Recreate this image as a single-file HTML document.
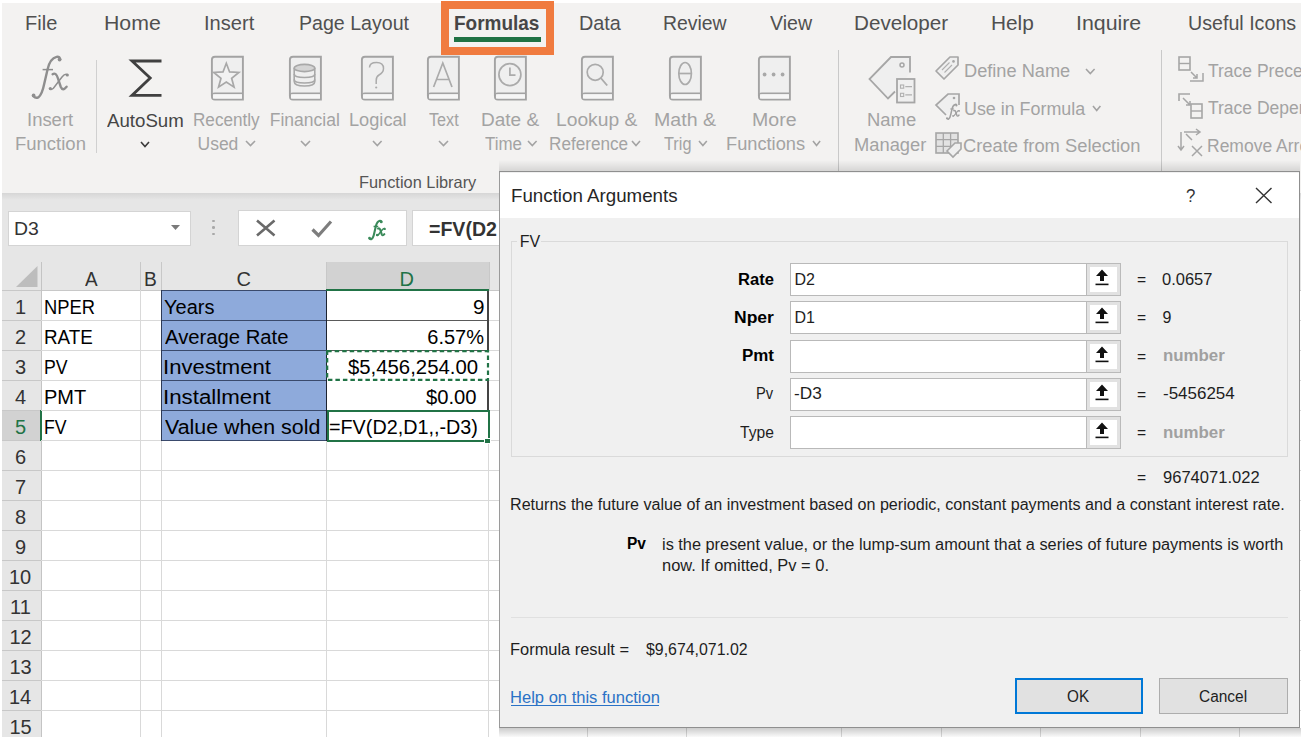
<!DOCTYPE html>
<html><head><meta charset="utf-8"><style>
html,body{margin:0;padding:0;width:1301px;height:737px;overflow:hidden;background:#fff;}
body{position:relative;font-family:"Liberation Sans",sans-serif;}
.t{position:absolute;white-space:pre;transform-origin:0 0;}
.a{position:absolute;box-sizing:border-box;}
svg{position:absolute;overflow:visible;}
</style></head><body>
<div class=a style="left:0px;top:0px;width:1301px;height:737px;background:#fff"></div>
<div class=a style="left:1.5px;top:3px;width:1299.5px;height:190px;background:#f3f2f1"></div>
<div class=a style="left:1.5px;top:193px;width:1299.5px;height:69px;background:#e6e6e6"></div>
<div class=a style="left:1.5px;top:193px;width:1299.5px;height:7px;background:linear-gradient(#d6d6d6,#e6e6e6)"></div>
<div class=a style="left:441px;top:1px;width:113px;height:54px;border:8px solid #f07b3f"></div>
<div class=a style="left:453.5px;top:37px;width:87px;height:4.6px;background:#1f7244"></div>
<div class=a style="left:96px;top:60px;width:1px;height:93px;background:#d0d0d0"></div>
<div class=a style="left:838px;top:50px;width:1px;height:143px;background:#c9c9c9"></div>
<div class=a style="left:1161px;top:50px;width:1px;height:122px;background:#c9c9c9"></div>
<div class=a style="left:7.5px;top:211px;width:183.5px;height:35px;background:#fff;border:1px solid #d4d4d4"></div>
<svg style="left:171px;top:225px" width="9" height="5"><path d="M0 0 L9 0 L4.5 5Z" fill="#7a7a7a"/></svg>
<div class=a style="left:212px;top:219.5px;width:2.5px;height:2.5px;background:#a8a8a8;border-radius:50%"></div>
<div class=a style="left:212px;top:226px;width:2.5px;height:2.5px;background:#a8a8a8;border-radius:50%"></div>
<div class=a style="left:212px;top:232.5px;width:2.5px;height:2.5px;background:#a8a8a8;border-radius:50%"></div>
<div class=a style="left:237.5px;top:210px;width:169px;height:36px;background:#fff;border:1px solid #d4d4d4"></div>
<svg style="left:256px;top:220px" width="20" height="16"><path d="M1 0.5 L18.5 15.5 M18.5 0.5 L1 15.5" stroke="#6a6a6a" stroke-width="2.6" fill="none"/></svg>
<svg style="left:311px;top:220px" width="22" height="18"><path d="M1.5 9.5 L7.5 15.5 L20 1.5" stroke="#7d7d7d" stroke-width="3.2" fill="none"/></svg>
<svg style="left:366.94px;top:219.10px" width="20" height="21" viewBox="0 0 44.44 46.67"><path d="M5.5 43.3 Q7.5 45.6 10.3 44.4 Q14 42 16.3 30.6 L19.6 16.3 Q22 5.5 28.6 3.9 Q31.5 3.4 32.2 6.3" fill="none" stroke="#3a8a5a" stroke-width="4.6" stroke-linecap="round"/><circle cx="5.6" cy="42.4" r="3" fill="#3a8a5a"/><circle cx="31.6" cy="6.6" r="3" fill="#3a8a5a"/><path d="M14.6 16.6 H25" stroke="#3a8a5a" stroke-width="3.4"/><path d="M24.6 21.2 Q28 19 30 25.5 L32.8 34 Q34.8 38.5 38.6 33.8" fill="none" stroke="#3a8a5a" stroke-width="4.6" stroke-linecap="round"/><path d="M39.4 21.6 Q37 20.2 34 24 L25.4 35.2 Q23.4 37.2 21.8 36" fill="none" stroke="#3a8a5a" stroke-width="3.4"/><circle cx="39.3" cy="22" r="2.6" fill="#3a8a5a"/><circle cx="22.3" cy="35.6" r="2.6" fill="#3a8a5a"/></svg>
<div class=a style="left:411.5px;top:210px;width:90px;height:36px;background:#fff;border:1px solid #d4d4d4;border-right:none"></div>
<div class=a style="left:1.5px;top:262px;width:1299.5px;height:28px;background:#e6e6e6"></div>
<div class=a style="left:326px;top:262px;width:163px;height:28px;background:#d2d2d2"></div>
<div class=a style="left:326px;top:288.8px;width:163px;height:2px;background:#217346"></div>
<div class=a style="left:1.5px;top:290px;width:39.5px;height:447px;background:#e6e6e6"></div>
<div class=a style="left:1.5px;top:410px;width:39.5px;height:30px;background:#d2d2d2"></div>
<div class=a style="left:39.5px;top:410px;width:2px;height:31px;background:#217346"></div>
<svg style="left:15px;top:265px" width="24" height="23"><path d="M22.5 1 L22.5 22 L1 22Z" fill="#bdbdbd"/></svg>
<div class=a style="left:41px;top:262px;width:1px;height:28px;background:#c8c8c8"></div>
<div class=a style="left:140px;top:262px;width:1px;height:28px;background:#c8c8c8"></div>
<div class=a style="left:161px;top:262px;width:1px;height:28px;background:#c8c8c8"></div>
<div class=a style="left:489px;top:262px;width:1px;height:28px;background:#c8c8c8"></div>
<div class=a style="left:326px;top:262px;width:1px;height:28px;background:#c8c8c8"></div>
<div class=a style="left:1.5px;top:289.5px;width:1299.5px;height:1px;background:#c8c8c8"></div>
<div class=a style="left:326px;top:288.8px;width:163px;height:2px;background:#217346"></div>
<div class=a style="left:1.5px;top:320px;width:39.5px;height:1px;background:#c8c8c8"></div>
<div class=a style="left:1.5px;top:350px;width:39.5px;height:1px;background:#c8c8c8"></div>
<div class=a style="left:1.5px;top:380px;width:39.5px;height:1px;background:#c8c8c8"></div>
<div class=a style="left:1.5px;top:410px;width:39.5px;height:1px;background:#c8c8c8"></div>
<div class=a style="left:1.5px;top:440px;width:39.5px;height:1px;background:#c8c8c8"></div>
<div class=a style="left:1.5px;top:470px;width:39.5px;height:1px;background:#c8c8c8"></div>
<div class=a style="left:1.5px;top:500px;width:39.5px;height:1px;background:#c8c8c8"></div>
<div class=a style="left:1.5px;top:530px;width:39.5px;height:1px;background:#c8c8c8"></div>
<div class=a style="left:1.5px;top:560px;width:39.5px;height:1px;background:#c8c8c8"></div>
<div class=a style="left:1.5px;top:590px;width:39.5px;height:1px;background:#c8c8c8"></div>
<div class=a style="left:1.5px;top:620px;width:39.5px;height:1px;background:#c8c8c8"></div>
<div class=a style="left:1.5px;top:650px;width:39.5px;height:1px;background:#c8c8c8"></div>
<div class=a style="left:1.5px;top:680px;width:39.5px;height:1px;background:#c8c8c8"></div>
<div class=a style="left:1.5px;top:710px;width:39.5px;height:1px;background:#c8c8c8"></div>
<div class=a style="left:1.5px;top:740px;width:39.5px;height:1px;background:#c8c8c8"></div>
<div class=a style="left:40.5px;top:262px;width:1px;height:475px;background:#c4c4c4"></div>
<div class=a style="left:39.5px;top:410px;width:2px;height:31px;background:#217346"></div>
<div class=a style="left:140px;top:290px;width:1px;height:447px;background:#d9d9d9"></div>
<div class=a style="left:161px;top:290px;width:1px;height:447px;background:#d9d9d9"></div>
<div class=a style="left:326px;top:290px;width:1px;height:447px;background:#d9d9d9"></div>
<div class=a style="left:488px;top:290px;width:1px;height:447px;background:#d9d9d9"></div>
<div class=a style="left:587px;top:290px;width:1px;height:447px;background:#d9d9d9"></div>
<div class=a style="left:686px;top:290px;width:1px;height:447px;background:#d9d9d9"></div>
<div class=a style="left:841px;top:290px;width:1px;height:447px;background:#d9d9d9"></div>
<div class=a style="left:941px;top:290px;width:1px;height:447px;background:#d9d9d9"></div>
<div class=a style="left:1040px;top:290px;width:1px;height:447px;background:#d9d9d9"></div>
<div class=a style="left:1140px;top:290px;width:1px;height:447px;background:#d9d9d9"></div>
<div class=a style="left:1239px;top:290px;width:1px;height:447px;background:#d9d9d9"></div>
<div class=a style="left:41px;top:320px;width:1260px;height:1px;background:#d9d9d9"></div>
<div class=a style="left:41px;top:350px;width:1260px;height:1px;background:#d9d9d9"></div>
<div class=a style="left:41px;top:380px;width:1260px;height:1px;background:#d9d9d9"></div>
<div class=a style="left:41px;top:410px;width:1260px;height:1px;background:#d9d9d9"></div>
<div class=a style="left:41px;top:440px;width:1260px;height:1px;background:#d9d9d9"></div>
<div class=a style="left:41px;top:470px;width:1260px;height:1px;background:#d9d9d9"></div>
<div class=a style="left:41px;top:500px;width:1260px;height:1px;background:#d9d9d9"></div>
<div class=a style="left:41px;top:530px;width:1260px;height:1px;background:#d9d9d9"></div>
<div class=a style="left:41px;top:560px;width:1260px;height:1px;background:#d9d9d9"></div>
<div class=a style="left:41px;top:590px;width:1260px;height:1px;background:#d9d9d9"></div>
<div class=a style="left:41px;top:620px;width:1260px;height:1px;background:#d9d9d9"></div>
<div class=a style="left:41px;top:650px;width:1260px;height:1px;background:#d9d9d9"></div>
<div class=a style="left:41px;top:680px;width:1260px;height:1px;background:#d9d9d9"></div>
<div class=a style="left:41px;top:710px;width:1260px;height:1px;background:#d9d9d9"></div>
<div class=a style="left:41px;top:740px;width:1260px;height:1px;background:#d9d9d9"></div>
<div class=a style="left:161px;top:290px;width:165.5px;height:150px;background:#8eaadb"></div>
<div class=a style="left:160.5px;top:319.6px;width:166px;height:1.9px;background:#3a4a6c"></div>
<div class=a style="left:326px;top:319.6px;width:163px;height:1.9px;background:#5a5a5a"></div>
<div class=a style="left:160.5px;top:349.6px;width:166px;height:1.9px;background:#3a4a6c"></div>
<div class=a style="left:326px;top:349.6px;width:163px;height:1.9px;background:#5a5a5a"></div>
<div class=a style="left:160.5px;top:379.6px;width:166px;height:1.9px;background:#3a4a6c"></div>
<div class=a style="left:326px;top:379.6px;width:163px;height:1.9px;background:#5a5a5a"></div>
<div class=a style="left:160.5px;top:409.6px;width:166px;height:1.9px;background:#3a4a6c"></div>
<div class=a style="left:326px;top:409.6px;width:163px;height:1.9px;background:#5a5a5a"></div>
<div class=a style="left:160.5px;top:439.6px;width:166px;height:1.9px;background:#3a4a6c"></div>
<div class=a style="left:326px;top:439.6px;width:163px;height:1.9px;background:#5a5a5a"></div>
<div class=a style="left:160.5px;top:290px;width:166px;height:1px;background:#3a4a6c"></div>
<div class=a style="left:160.5px;top:290px;width:1.9px;height:151px;background:#2e3a55"></div>
<div class=a style="left:325.5px;top:290px;width:1.8px;height:151px;background:#1e2430"></div>
<div class=a style="left:487.4px;top:290px;width:1.7px;height:151px;background:#444"></div>
<div class=a style="left:326.5px;top:350.5px;width:162px;height:30px;background:#fff"></div>
<svg style="left:326px;top:350px" width="164" height="32"><rect x="1.2" y="1.2" width="160.8" height="28.6" fill="none" stroke="#217346" stroke-width="2.2" stroke-dasharray="4.5 3"/></svg>
<div class=a style="left:326.5px;top:410px;width:163px;height:31.5px;background:#fff;border:2px solid #217346"></div>
<div class=a style="left:484px;top:437.5px;width:7px;height:6px;background:#217346;border:1px solid #fff"></div>
<div class=a style="left:326px;top:288.8px;width:163px;height:2px;background:#217346"></div>
<svg style="left:28px;top:53px" width="44" height="48" viewBox="0 0 44 48"><path d="M5.5 43.3 Q7.5 45.6 10.3 44.4 Q14 42 16.3 30.6 L19.6 16.3 Q22 5.5 28.6 3.9 Q31.5 3.4 32.2 6.3" fill="none" stroke="#8e8e8e" stroke-width="2.4" stroke-linecap="round"/><circle cx="5.6" cy="42.4" r="1.9" fill="#8e8e8e"/><circle cx="31.6" cy="6.6" r="1.9" fill="#8e8e8e"/><path d="M14.6 16.6 H25" stroke="#8e8e8e" stroke-width="1.5"/><path d="M24.6 21.2 Q28 19 30 25.5 L32.8 34 Q34.8 38.5 38.6 33.8" fill="none" stroke="#8e8e8e" stroke-width="2.4" stroke-linecap="round"/><path d="M39.4 21.6 Q37 20.2 34 24 L25.4 35.2 Q23.4 37.2 21.8 36" fill="none" stroke="#8e8e8e" stroke-width="1.5"/><circle cx="39.3" cy="22" r="1.6" fill="#8e8e8e"/><circle cx="22.3" cy="35.6" r="1.6" fill="#8e8e8e"/></svg>
<svg style="left:128px;top:57px" width="36" height="42" viewBox="0 0 36 42"><path d="M33.5 4 H4 L22.2 21 L4 38.4 H33.5" fill="none" stroke="#404040" stroke-width="2.8" stroke-linejoin="miter"/></svg>
<svg style="left:139px;top:139.5px" width="12" height="8.5" viewBox="0 0 12 8.5"><path d="M2 2 L6.0 6.5 L10 2" fill="none" stroke="#3a3a3a" stroke-width="1.6"/></svg>
<svg style="left:243.5px;top:139px" width="13.0" height="8.5" viewBox="0 0 13.0 8.5"><path d="M2 2 L6.5 6.5 L11.0 2" fill="none" stroke="#a3a3a3" stroke-width="1.6"/></svg>
<svg style="left:298.6px;top:139px" width="13.0" height="8.5" viewBox="0 0 13.0 8.5"><path d="M2 2 L6.5 6.5 L11.0 2" fill="none" stroke="#a3a3a3" stroke-width="1.6"/></svg>
<svg style="left:370.9px;top:139px" width="12.600000000000023" height="8.5" viewBox="0 0 12.600000000000023 8.5"><path d="M2 2 L6.300000000000011 6.5 L10.600000000000023 2" fill="none" stroke="#a3a3a3" stroke-width="1.6"/></svg>
<svg style="left:437px;top:139px" width="13" height="8.5" viewBox="0 0 13 8.5"><path d="M2 2 L6.5 6.5 L11 2" fill="none" stroke="#a3a3a3" stroke-width="1.6"/></svg>
<svg style="left:526.4px;top:139px" width="12.600000000000023" height="8.5" viewBox="0 0 12.600000000000023 8.5"><path d="M2 2 L6.300000000000011 6.5 L10.600000000000023 2" fill="none" stroke="#a3a3a3" stroke-width="1.6"/></svg>
<svg style="left:630px;top:139px" width="12" height="8.5" viewBox="0 0 12 8.5"><path d="M2 2 L6.0 6.5 L10 2" fill="none" stroke="#a3a3a3" stroke-width="1.6"/></svg>
<svg style="left:697px;top:139px" width="11.799999999999955" height="8.5" viewBox="0 0 11.799999999999955 8.5"><path d="M2 2 L5.899999999999977 6.5 L9.799999999999955 2" fill="none" stroke="#a3a3a3" stroke-width="1.6"/></svg>
<svg style="left:810.5px;top:139px" width="11.100000000000023" height="8.5" viewBox="0 0 11.100000000000023 8.5"><path d="M2 2 L5.550000000000011 6.5 L9.100000000000023 2" fill="none" stroke="#a3a3a3" stroke-width="1.6"/></svg>
<svg style="left:1084px;top:67px" width="12.599999999999909" height="8.5" viewBox="0 0 12.599999999999909 8.5"><path d="M2 2 L6.2999999999999545 6.5 L10.599999999999909 2" fill="none" stroke="#a3a3a3" stroke-width="1.6"/></svg>
<svg style="left:1091.4px;top:104px" width="11.399999999999864" height="8.5" viewBox="0 0 11.399999999999864 8.5"><path d="M2 2 L5.699999999999932 6.5 L9.399999999999864 2" fill="none" stroke="#a3a3a3" stroke-width="1.6"/></svg>
<svg style="left:209.8px;top:55px" width="36" height="47" viewBox="0 0 36 47"><path d="M32.9 1.7 H5 Q1.9 1.7 1.9 4.8 V41.4 Q1.9 44.5 5 44.5 H32.9 Z" fill="#efefef" stroke="#a3a3a3" stroke-width="1.9"/><path d="M32.9 38.3 H5 Q1.9 38.3 1.9 41.4" fill="none" stroke="#a3a3a3" stroke-width="1.7"/><rect x="3" y="39.3" width="29" height="4.3" fill="#f6f6f6"/><path d="M16.30 8.30 L19.59 16.97 L28.85 17.42 L21.63 23.23 L24.06 32.18 L16.30 27.10 L8.54 32.18 L10.97 23.23 L3.75 17.42 L13.01 16.97Z" fill="#f2f2f2" stroke="#a8a8a8" stroke-width="1.7" stroke-linejoin="miter"/></svg>
<svg style="left:287.9px;top:55px" width="36" height="47" viewBox="0 0 36 47"><path d="M32.9 1.7 H5 Q1.9 1.7 1.9 4.8 V41.4 Q1.9 44.5 5 44.5 H32.9 Z" fill="#efefef" stroke="#a3a3a3" stroke-width="1.9"/><path d="M32.9 38.3 H5 Q1.9 38.3 1.9 41.4" fill="none" stroke="#a3a3a3" stroke-width="1.7"/><rect x="3" y="39.3" width="29" height="4.3" fill="#f6f6f6"/><ellipse cx="16.5" cy="13" rx="10.3" ry="3.6" fill="#d4d4d4" stroke="#a8a8a8" stroke-width="1.6"/><path d="M6.2 13 V26.5 Q6.2 31 16.5 31 Q26.8 31 26.8 26.5 V13" fill="none" stroke="#a8a8a8" stroke-width="1.6"/><path d="M6.2 19 Q6.2 22.5 16.5 22.5 Q26.8 22.5 26.8 19 M6.2 24.5 Q6.2 28 16.5 28 Q26.8 28 26.8 24.5" fill="none" stroke="#a8a8a8" stroke-width="1.6"/></svg>
<svg style="left:360px;top:55px" width="36" height="47" viewBox="0 0 36 47"><path d="M32.9 1.7 H5 Q1.9 1.7 1.9 4.8 V41.4 Q1.9 44.5 5 44.5 H32.9 Z" fill="#efefef" stroke="#a3a3a3" stroke-width="1.9"/><path d="M32.9 38.3 H5 Q1.9 38.3 1.9 41.4" fill="none" stroke="#a3a3a3" stroke-width="1.7"/><rect x="3" y="39.3" width="29" height="4.3" fill="#f6f6f6"/><path d="M9.5 12.5 Q9.5 7.5 16.5 7.5 Q23.5 7.5 23.5 13.5 Q23.5 17.5 19 20 Q16.2 21.5 16.2 25.5 V29" fill="none" stroke="#ababab" stroke-width="1.5"/><circle cx="16.2" cy="32.5" r="1.1" fill="#ababab"/></svg>
<svg style="left:426.3px;top:55px" width="36" height="47" viewBox="0 0 36 47"><path d="M32.9 1.7 H5 Q1.9 1.7 1.9 4.8 V41.4 Q1.9 44.5 5 44.5 H32.9 Z" fill="#efefef" stroke="#a3a3a3" stroke-width="1.9"/><path d="M32.9 38.3 H5 Q1.9 38.3 1.9 41.4" fill="none" stroke="#a3a3a3" stroke-width="1.7"/><rect x="3" y="39.3" width="29" height="4.3" fill="#f6f6f6"/><path d="M7.6 32 L16.8 8 L26 32 M10.8 24.5 H22.8" fill="none" stroke="#ababab" stroke-width="1.7"/></svg>
<svg style="left:493px;top:55px" width="36" height="47" viewBox="0 0 36 47"><path d="M32.9 1.7 H5 Q1.9 1.7 1.9 4.8 V41.4 Q1.9 44.5 5 44.5 H32.9 Z" fill="#efefef" stroke="#a3a3a3" stroke-width="1.9"/><path d="M32.9 38.3 H5 Q1.9 38.3 1.9 41.4" fill="none" stroke="#a3a3a3" stroke-width="1.7"/><rect x="3" y="39.3" width="29" height="4.3" fill="#f6f6f6"/><circle cx="16.9" cy="19.6" r="11" fill="none" stroke="#ababab" stroke-width="1.7"/><path d="M16.9 12.5 V20.2 H22.5" fill="none" stroke="#ababab" stroke-width="1.7"/></svg>
<svg style="left:580px;top:55px" width="36" height="47" viewBox="0 0 36 47"><path d="M32.9 1.7 H5 Q1.9 1.7 1.9 4.8 V41.4 Q1.9 44.5 5 44.5 H32.9 Z" fill="#efefef" stroke="#a3a3a3" stroke-width="1.9"/><path d="M32.9 38.3 H5 Q1.9 38.3 1.9 41.4" fill="none" stroke="#a3a3a3" stroke-width="1.7"/><rect x="3" y="39.3" width="29" height="4.3" fill="#f6f6f6"/><circle cx="15.2" cy="17.3" r="8" fill="none" stroke="#ababab" stroke-width="1.7"/><path d="M20.8 23 L27.2 30.5" fill="none" stroke="#ababab" stroke-width="1.9"/></svg>
<svg style="left:667.7px;top:55px" width="36" height="47" viewBox="0 0 36 47"><path d="M32.9 1.7 H5 Q1.9 1.7 1.9 4.8 V41.4 Q1.9 44.5 5 44.5 H32.9 Z" fill="#efefef" stroke="#a3a3a3" stroke-width="1.9"/><path d="M32.9 38.3 H5 Q1.9 38.3 1.9 41.4" fill="none" stroke="#a3a3a3" stroke-width="1.7"/><rect x="3" y="39.3" width="29" height="4.3" fill="#f6f6f6"/><ellipse cx="17.1" cy="18.5" rx="6.3" ry="11" fill="none" stroke="#ababab" stroke-width="1.7"/><path d="M10.8 18.5 H23.4" stroke="#ababab" stroke-width="1.7"/></svg>
<svg style="left:756.9px;top:55px" width="36" height="47" viewBox="0 0 36 47"><path d="M32.9 1.7 H5 Q1.9 1.7 1.9 4.8 V41.4 Q1.9 44.5 5 44.5 H32.9 Z" fill="#efefef" stroke="#a3a3a3" stroke-width="1.9"/><path d="M32.9 38.3 H5 Q1.9 38.3 1.9 41.4" fill="none" stroke="#a3a3a3" stroke-width="1.7"/><rect x="3" y="39.3" width="29" height="4.3" fill="#f6f6f6"/><circle cx="7.6" cy="19.5" r="1.9" fill="#a8a8a8"/><circle cx="16.6" cy="19.5" r="1.9" fill="#a8a8a8"/><circle cx="25.6" cy="19.5" r="1.9" fill="#a8a8a8"/></svg>
<svg style="left:866px;top:54px" width="52" height="52" viewBox="0 0 52 52"><path d="M44 18.5 V3 H25 L3.5 25 L22 44.5 L29 37.5" fill="#efefef" stroke="#a6a6a6" stroke-width="1.8" stroke-linejoin="miter"/><circle cx="36" cy="11" r="2" fill="none" stroke="#a6a6a6" stroke-width="1.5"/><rect x="31" y="25" width="17.5" height="23.5" fill="#efefef" stroke="#a6a6a6" stroke-width="1.8"/><rect x="34.5" y="31" width="3.2" height="3.2" fill="none" stroke="#b0b0b0" stroke-width="1.1"/><rect x="34.5" y="39.3" width="3.2" height="3.2" fill="none" stroke="#b0b0b0" stroke-width="1.1"/><path d="M39.3 32.6 H46 M39.3 40.9 H46" stroke="#b0b0b0" stroke-width="1.2"/></svg>
<svg style="left:933px;top:54px" width="28" height="28" viewBox="0 0 28 28"><path d="M25 3 L25 11 L11 25 L3 17 L17 3 Z" fill="#efefef" stroke="#a6a6a6" stroke-width="1.7" stroke-linejoin="round"/><circle cx="20.5" cy="7.4" r="1.3" fill="#a6a6a6"/><path d="M9 16 L16.5 8.5 M11.5 18.5 L19 11" stroke="#b0b0b0" stroke-width="1.1"/></svg>
<svg style="left:933px;top:91px" width="30" height="30" viewBox="0 0 30 30"><path d="M26 14 V3 H15 L3 14 L13 24" fill="#efefef" stroke="#a6a6a6" stroke-width="1.7"/><circle cx="21" cy="7" r="1.3" fill="#a6a6a6"/></svg>
<svg style="left:945.368px;top:102.98px" width="16" height="17" viewBox="0 0 16 17"><g transform="scale(0.36)"><path d="M5.5 43.3 Q7.5 45.6 10.3 44.4 Q14 42 16.3 30.6 L19.6 16.3 Q22 5.5 28.6 3.9 Q31.5 3.4 32.2 6.3" fill="none" stroke="#a0a0a0" stroke-width="4.2" stroke-linecap="round"/><circle cx="5.6" cy="42.4" r="2.8" fill="#a0a0a0"/><circle cx="31.6" cy="6.6" r="2.8" fill="#a0a0a0"/><path d="M14.6 16.6 H25" stroke="#a0a0a0" stroke-width="3"/><path d="M24.6 21.2 Q28 19 30 25.5 L32.8 34 Q34.8 38.5 38.6 33.8" fill="none" stroke="#a0a0a0" stroke-width="4.2" stroke-linecap="round"/><path d="M39.4 21.6 Q37 20.2 34 24 L25.4 35.2 Q23.4 37.2 21.8 36" fill="none" stroke="#a0a0a0" stroke-width="3"/><circle cx="39.3" cy="22" r="2.4" fill="#a0a0a0"/><circle cx="22.3" cy="35.6" r="2.4" fill="#a0a0a0"/></g></svg>
<svg style="left:934px;top:131px" width="30" height="28" viewBox="0 0 30 28"><rect x="2" y="2" width="22" height="20" fill="#e2e2e2" stroke="#a6a6a6" stroke-width="1.6"/><path d="M2 8.6 H24 M2 15.3 H24 M9.3 2 V22 M16.6 2 V22" stroke="#a6a6a6" stroke-width="1.3"/><path d="M13 20 L21 12 H27 V18 L19 26 Z" fill="#efefef" stroke="#a6a6a6" stroke-width="1.6"/></svg>
<svg style="left:1176px;top:54px" width="30" height="28" viewBox="0 0 30 28"><rect x="3" y="3" width="11" height="13" fill="none" stroke="#a6a6a6" stroke-width="1.6"/><path d="M3 9.5 H14" stroke="#a6a6a6" stroke-width="1.4"/><path d="M15 18 L21 24 M17 24 H21 V20 M14 27 H27 V19" fill="none" stroke="#a6a6a6" stroke-width="1.5"/></svg>
<svg style="left:1176px;top:91px" width="30" height="30" viewBox="0 0 30 30"><path d="M3 10 V3 H14" fill="none" stroke="#a6a6a6" stroke-width="1.6"/><path d="M7 7 L14 14 M10 14 H14 V10" fill="none" stroke="#a6a6a6" stroke-width="1.5"/><rect x="15" y="13" width="11" height="14" fill="none" stroke="#a6a6a6" stroke-width="1.6"/><path d="M15 20 H26" stroke="#a6a6a6" stroke-width="1.4"/></svg>
<svg style="left:1176px;top:128px" width="30" height="30" viewBox="0 0 30 30"><path d="M5 4 V22 M2 18 L5 22 L8 18 M8 4 H24 M20 1 L24 4 L20 7 M10 6 L16 12" fill="none" stroke="#a6a6a6" stroke-width="1.5"/><path d="M16 18 L26 28 M26 18 L16 28" stroke="#a6a6a6" stroke-width="1.5"/></svg>
<div class=t style="left:25.35px;top:2.90px;font-size:20.5px;line-height:40px;color:#505050;transform:scaleX(0.9767);">File</div>
<div class=t style="left:103.92px;top:2.90px;font-size:20.5px;line-height:40px;color:#505050;transform:scaleX(1.0385);">Home</div>
<div class=t style="left:204.04px;top:2.90px;font-size:20.5px;line-height:40px;color:#505050;transform:scaleX(0.9796);">Insert</div>
<div class=t style="left:299.09px;top:2.90px;font-size:20.5px;line-height:40px;color:#505050;transform:scaleX(0.9558);">Page Layout</div>
<div class=t style="left:453.57px;top:2.90px;font-size:20.5px;line-height:40px;color:#464646;font-weight:700;transform:scaleX(0.9253);">Formulas</div>
<div class=t style="left:578.97px;top:2.90px;font-size:20.5px;line-height:40px;color:#505050;transform:scaleX(0.9667);">Data</div>
<div class=t style="left:662.61px;top:2.90px;font-size:20.5px;line-height:40px;color:#505050;transform:scaleX(0.9462);">Review</div>
<div class=t style="left:770.00px;top:2.90px;font-size:20.5px;line-height:40px;color:#505050;transform:scaleX(0.9545);">View</div>
<div class=t style="left:853.79px;top:2.90px;font-size:20.5px;line-height:40px;color:#505050;transform:scaleX(1.0066);">Developer</div>
<div class=t style="left:990.77px;top:2.90px;font-size:20.5px;line-height:40px;color:#505050;transform:scaleX(1.0150);">Help</div>
<div class=t style="left:1076.42px;top:2.90px;font-size:20.5px;line-height:40px;color:#505050;transform:scaleX(1.0400);">Inquire</div>
<div class=t style="left:1187.64px;top:2.90px;font-size:20.5px;line-height:40px;color:#505050;transform:scaleX(0.9586);">Useful Icons</div>
<div class=t style="left:26.89px;top:100.04px;font-size:17.5px;line-height:40px;color:#a3a3a3;transform:scaleX(1.0548);">Insert</div>
<div class=t style="left:15.24px;top:124.44px;font-size:17.5px;line-height:40px;color:#a3a3a3;transform:scaleX(1.0569);">Function</div>
<div class=t style="left:106.70px;top:100.84px;font-size:17.5px;line-height:40px;color:#454545;transform:scaleX(1.0662);">AutoSum</div>
<div class=t style="left:193.42px;top:99.84px;font-size:17.5px;line-height:40px;color:#a3a3a3;transform:scaleX(0.9791);">Recently</div>
<div class=t style="left:197.50px;top:124.24px;font-size:17.5px;line-height:40px;color:#a3a3a3;">Used</div>
<div class=t style="left:269.80px;top:99.84px;font-size:17.5px;line-height:40px;color:#a3a3a3;">Financial</div>
<div class=t style="left:349.26px;top:99.84px;font-size:17.5px;line-height:40px;color:#a3a3a3;transform:scaleX(1.0396);">Logical</div>
<div class=t style="left:429.40px;top:99.84px;font-size:17.5px;line-height:40px;color:#a3a3a3;transform:scaleX(0.9250);">Text</div>
<div class=t style="left:481.41px;top:99.84px;font-size:17.5px;line-height:40px;color:#a3a3a3;transform:scaleX(1.0865);">Date &amp;</div>
<div class=t style="left:485.00px;top:124.24px;font-size:17.5px;line-height:40px;color:#a3a3a3;transform:scaleX(0.9658);">Time</div>
<div class=t style="left:555.60px;top:99.84px;font-size:17.5px;line-height:40px;color:#a3a3a3;transform:scaleX(1.1000);">Lookup &amp;</div>
<div class=t style="left:548.62px;top:124.24px;font-size:17.5px;line-height:40px;color:#a3a3a3;transform:scaleX(0.9797);">Reference</div>
<div class=t style="left:654.48px;top:99.84px;font-size:17.5px;line-height:40px;color:#a3a3a3;transform:scaleX(1.1185);">Math &amp;</div>
<div class=t style="left:663.70px;top:124.24px;font-size:17.5px;line-height:40px;color:#a3a3a3;transform:scaleX(0.9310);">Trig</div>
<div class=t style="left:752.48px;top:99.84px;font-size:17.5px;line-height:40px;color:#a3a3a3;transform:scaleX(1.1158);">More</div>
<div class=t style="left:725.56px;top:124.24px;font-size:17.5px;line-height:40px;color:#a3a3a3;transform:scaleX(1.0419);">Functions</div>
<div class=t style="left:866.55px;top:100.44px;font-size:17.5px;line-height:40px;color:#a3a3a3;transform:scaleX(1.0533);">Name</div>
<div class=t style="left:853.75px;top:125.24px;font-size:17.5px;line-height:40px;color:#a3a3a3;transform:scaleX(1.0471);">Manager</div>
<div class=t style="left:963.96px;top:51.44px;font-size:17.5px;line-height:40px;color:#a3a3a3;transform:scaleX(1.0396);">Define Name</div>
<div class=t style="left:963.98px;top:88.84px;font-size:17.5px;line-height:40px;color:#a3a3a3;transform:scaleX(1.0212);">Use in Formula</div>
<div class=t style="left:963.25px;top:126.44px;font-size:17.5px;line-height:40px;color:#a3a3a3;transform:scaleX(1.0485);">Create from Selection</div>
<div class=t style="left:1208.00px;top:51.44px;font-size:17.5px;line-height:40px;color:#a3a3a3;">Trace Precedents</div>
<div class=t style="left:1208.00px;top:88.44px;font-size:17.5px;line-height:40px;color:#a3a3a3;">Trace Dependents</div>
<div class=t style="left:1207.00px;top:126.14px;font-size:17.5px;line-height:40px;color:#a3a3a3;">Remove Arrows</div>
<div class=t style="left:358.91px;top:161.58px;font-size:16.5px;line-height:40px;color:#555;transform:scaleX(0.9915);">Function Library</div>
<div class=t style="left:14.48px;top:209.12px;font-size:19px;line-height:40px;color:#333;transform:scaleX(1.0217);">D3</div>
<div class=t style="left:428.62px;top:208.97px;font-size:20px;line-height:40px;color:#333;font-weight:700;transform:scaleX(0.9779);">=FV(D2</div>
<div class=t style="left:84.50px;top:258.57px;font-size:20px;line-height:40px;color:#333;transform:scaleX(0.9462);">A</div>
<div class=t style="left:144.08px;top:258.57px;font-size:20px;line-height:40px;color:#333;transform:scaleX(0.9600);">B</div>
<div class=t style="left:236.50px;top:258.57px;font-size:20px;line-height:40px;color:#333;">C</div>
<div class=t style="left:399.50px;top:258.57px;font-size:20px;line-height:40px;color:#217346;">D</div>
<div class=t style="left:15.00px;top:287.37px;font-size:20px;line-height:40px;color:#333;">1</div>
<div class=t style="left:15.00px;top:317.37px;font-size:20px;line-height:40px;color:#333;">2</div>
<div class=t style="left:15.00px;top:347.37px;font-size:20px;line-height:40px;color:#333;">3</div>
<div class=t style="left:15.00px;top:377.37px;font-size:20px;line-height:40px;color:#333;">4</div>
<div class=t style="left:15.00px;top:407.37px;font-size:20px;line-height:40px;color:#217346;">5</div>
<div class=t style="left:15.00px;top:437.37px;font-size:20px;line-height:40px;color:#333;">6</div>
<div class=t style="left:15.00px;top:467.37px;font-size:20px;line-height:40px;color:#333;">7</div>
<div class=t style="left:15.00px;top:497.37px;font-size:20px;line-height:40px;color:#333;">8</div>
<div class=t style="left:15.00px;top:527.37px;font-size:20px;line-height:40px;color:#333;">9</div>
<div class=t style="left:9.00px;top:557.37px;font-size:20px;line-height:40px;color:#333;">10</div>
<div class=t style="left:10.00px;top:587.37px;font-size:20px;line-height:40px;color:#333;">11</div>
<div class=t style="left:9.50px;top:617.37px;font-size:20px;line-height:40px;color:#333;">12</div>
<div class=t style="left:9.50px;top:647.37px;font-size:20px;line-height:40px;color:#333;">13</div>
<div class=t style="left:9.00px;top:677.37px;font-size:20px;line-height:40px;color:#333;">14</div>
<div class=t style="left:9.50px;top:707.37px;font-size:20px;line-height:40px;color:#333;">15</div>
<div class=t style="left:44.07px;top:287.37px;font-size:20px;line-height:40px;color:#000;transform:scaleX(0.9173);">NPER</div>
<div class=t style="left:44.02px;top:317.37px;font-size:20px;line-height:40px;color:#000;transform:scaleX(0.9408);">RATE</div>
<div class=t style="left:44.13px;top:347.37px;font-size:20px;line-height:40px;color:#000;transform:scaleX(0.8840);">PV</div>
<div class=t style="left:43.89px;top:377.37px;font-size:20px;line-height:40px;color:#000;">PMT</div>
<div class=t style="left:44.13px;top:407.37px;font-size:20px;line-height:40px;color:#000;transform:scaleX(0.8833);">FV</div>
<div class=t style="left:164.00px;top:287.17px;font-size:20px;line-height:40px;color:#000;">Years</div>
<div class=t style="left:165.00px;top:317.17px;font-size:20px;line-height:40px;color:#000;transform:scaleX(1.0124);">Average Rate</div>
<div class=t style="left:162.79px;top:347.17px;font-size:20px;line-height:40px;color:#000;transform:scaleX(1.1031);">Investment</div>
<div class=t style="left:162.77px;top:377.17px;font-size:20px;line-height:40px;color:#000;transform:scaleX(1.1147);">Installment</div>
<div class=t style="left:165.00px;top:407.17px;font-size:20px;line-height:40px;color:#000;transform:scaleX(1.0688);">Value when sold</div>
<div class=t style="left:472.87px;top:287.17px;font-size:20px;line-height:40px;color:#000;transform:scaleX(1.0333);">9</div>
<div class=t style="left:427.30px;top:317.17px;font-size:20px;line-height:40px;color:#000;">6.57%</div>
<div class=t style="left:347.80px;top:346.97px;font-size:20px;line-height:40px;color:#000;transform:scaleX(1.0165);">$5,456,254.00</div>
<div class=t style="left:426.40px;top:376.97px;font-size:20px;line-height:40px;color:#000;transform:scaleX(1.0100);">$0.00</div>
<div class=t style="left:329.41px;top:406.97px;font-size:20px;line-height:40px;color:#000;transform:scaleX(0.9886);">=FV(D2,D1,,-D3)</div>
<div class=a style="left:499px;top:160px;width:801px;height:12px;background:linear-gradient(rgba(0,0,0,0),rgba(0,0,0,0.13))"></div>
<div class=a style="left:499px;top:727.7px;width:802px;height:9.3px;background:linear-gradient(rgba(0,0,0,0.2),rgba(0,0,0,0.02))"></div>
<div class=a style="left:499px;top:171.4px;width:801px;height:556.3px;background:#f0f0f0;border:1px solid #8f8f8f;border-left:1.5px solid #9a9a9a"></div>
<div class=a style="left:500px;top:173px;width:799px;height:45px;background:#fff"></div>
<svg style="left:1255px;top:187px" width="18" height="17"><path d="M1 1 L16.5 16 M16.5 1 L1 16" stroke="#333" stroke-width="1.4" fill="none"/></svg>
<div class=a style="left:510.5px;top:241px;width:777px;height:216px;border:1px solid #dadada"></div>
<div class=a style="left:517px;top:236px;width:24px;height:10px;background:#f0f0f0"></div>
<div class=a style="left:790px;top:263px;width:331px;height:33px;background:#fff;border:1px solid #b9b9b9"></div>
<div class=a style="left:1086px;top:263px;width:35px;height:33px;background:#fff;border:1.5px solid #bababa;box-shadow:inset 0 0 0 3px #e2e2e2"></div>
<svg style="left:1095px;top:269px" width="14" height="17"><path d="M7 0.5 L13 7 L9 7 L9 12 L5 12 L5 7 L1 7Z" fill="#111"/><rect x="0.5" y="14.6" width="13" height="1.6" fill="#111"/></svg>
<div class=a style="left:790px;top:301px;width:331px;height:33px;background:#fff;border:1px solid #b9b9b9"></div>
<div class=a style="left:1086px;top:301px;width:35px;height:33px;background:#fff;border:1.5px solid #bababa;box-shadow:inset 0 0 0 3px #e2e2e2"></div>
<svg style="left:1095px;top:307px" width="14" height="17"><path d="M7 0.5 L13 7 L9 7 L9 12 L5 12 L5 7 L1 7Z" fill="#111"/><rect x="0.5" y="14.6" width="13" height="1.6" fill="#111"/></svg>
<div class=a style="left:790px;top:339.5px;width:331px;height:33px;background:#fff;border:1px solid #b9b9b9"></div>
<div class=a style="left:1086px;top:339.5px;width:35px;height:33px;background:#fff;border:1.5px solid #bababa;box-shadow:inset 0 0 0 3px #e2e2e2"></div>
<svg style="left:1095px;top:345.5px" width="14" height="17"><path d="M7 0.5 L13 7 L9 7 L9 12 L5 12 L5 7 L1 7Z" fill="#111"/><rect x="0.5" y="14.6" width="13" height="1.6" fill="#111"/></svg>
<div class=a style="left:790px;top:377.5px;width:331px;height:33px;background:#fff;border:1px solid #b9b9b9"></div>
<div class=a style="left:1086px;top:377.5px;width:35px;height:33px;background:#fff;border:1.5px solid #bababa;box-shadow:inset 0 0 0 3px #e2e2e2"></div>
<svg style="left:1095px;top:383.5px" width="14" height="17"><path d="M7 0.5 L13 7 L9 7 L9 12 L5 12 L5 7 L1 7Z" fill="#111"/><rect x="0.5" y="14.6" width="13" height="1.6" fill="#111"/></svg>
<div class=a style="left:790px;top:416px;width:331px;height:33px;background:#fff;border:1px solid #b9b9b9"></div>
<div class=a style="left:1086px;top:416px;width:35px;height:33px;background:#fff;border:1.5px solid #bababa;box-shadow:inset 0 0 0 3px #e2e2e2"></div>
<svg style="left:1095px;top:422px" width="14" height="17"><path d="M7 0.5 L13 7 L9 7 L9 12 L5 12 L5 7 L1 7Z" fill="#111"/><rect x="0.5" y="14.6" width="13" height="1.6" fill="#111"/></svg>
<div class=a style="left:510.5px;top:616.5px;width:777px;height:1px;background:#e0e0e0"></div>
<div class=a style="left:510.6px;top:704.8px;width:148px;height:1.3px;background:#2a72c6"></div>
<div class=a style="left:1014.5px;top:677.8px;width:128px;height:36.6px;background:#e1e1e1;border:2px solid #0078d7"></div>
<div class=a style="left:1159px;top:677.8px;width:128.6px;height:36.6px;background:#e1e1e1;border:1px solid #adadad"></div>
<div class=t style="left:511.49px;top:176.39px;font-size:18.5px;line-height:40px;color:#262626;transform:scaleX(1.0123);">Function Arguments</div>
<div class=t style="left:1185.67px;top:176.26px;font-size:18px;line-height:40px;color:#333;transform:scaleX(0.9333);">?</div>
<div class=t style="left:519.70px;top:221.96px;font-size:16px;line-height:40px;color:#1e1e1e;">FV</div>
<div class=t style="left:738.37px;top:259.66px;font-size:16px;line-height:40px;color:#000;font-weight:700;transform:scaleX(1.0333);">Rate</div>
<div class=t style="left:734.11px;top:297.86px;font-size:16px;line-height:40px;color:#000;font-weight:700;transform:scaleX(1.0943);">Nper</div>
<div class=t style="left:741.74px;top:336.36px;font-size:16px;line-height:40px;color:#000;font-weight:700;transform:scaleX(1.0586);">Pmt</div>
<div class=t style="left:756.08px;top:374.46px;font-size:16px;line-height:40px;color:#1e1e1e;transform:scaleX(0.9167);">Pv</div>
<div class=t style="left:740.30px;top:412.86px;font-size:16px;line-height:40px;color:#1e1e1e;transform:scaleX(0.9765);">Type</div>
<div class=t style="left:794.40px;top:259.66px;font-size:16px;line-height:40px;color:#1e1e1e;">D2</div>
<div class=t style="left:794.40px;top:297.86px;font-size:16px;line-height:40px;color:#1e1e1e;">D1</div>
<div class=t style="left:794.12px;top:374.46px;font-size:16px;line-height:40px;color:#1e1e1e;transform:scaleX(1.0750);">-D3</div>
<div class=t style="left:1137.03px;top:259.96px;font-size:16px;line-height:40px;color:#1e1e1e;transform:scaleX(0.9750);">=</div>
<div class=t style="left:1137.03px;top:298.16px;font-size:16px;line-height:40px;color:#1e1e1e;transform:scaleX(0.9750);">=</div>
<div class=t style="left:1137.03px;top:336.66px;font-size:16px;line-height:40px;color:#1e1e1e;transform:scaleX(0.9750);">=</div>
<div class=t style="left:1137.03px;top:374.76px;font-size:16px;line-height:40px;color:#1e1e1e;transform:scaleX(0.9750);">=</div>
<div class=t style="left:1137.03px;top:413.16px;font-size:16px;line-height:40px;color:#1e1e1e;transform:scaleX(0.9750);">=</div>
<div class=t style="left:1137.03px;top:457.96px;font-size:16px;line-height:40px;color:#1e1e1e;transform:scaleX(0.9750);">=</div>
<div class=t style="left:1162.37px;top:259.66px;font-size:16px;line-height:40px;color:#1e1e1e;transform:scaleX(1.0298);">0.0657</div>
<div class=t style="left:1162.60px;top:297.86px;font-size:16px;line-height:40px;color:#1e1e1e;">9</div>
<div class=t style="left:1162.75px;top:336.36px;font-size:16px;line-height:40px;color:#a0a0a0;font-weight:700;transform:scaleX(1.0534);">number</div>
<div class=t style="left:1162.74px;top:374.46px;font-size:16px;line-height:40px;color:#1e1e1e;transform:scaleX(1.0606);">-5456254</div>
<div class=t style="left:1162.75px;top:412.86px;font-size:16px;line-height:40px;color:#a0a0a0;font-weight:700;transform:scaleX(1.0534);">number</div>
<div class=t style="left:1162.57px;top:457.66px;font-size:16px;line-height:40px;color:#1e1e1e;transform:scaleX(1.0337);">9674071.022</div>
<div class=t style="left:509.99px;top:484.66px;font-size:16px;line-height:40px;color:#1e1e1e;transform:scaleX(1.0070);">Returns the future value of an investment based on periodic, constant payments and a constant interest rate.</div>
<div class=t style="left:627.03px;top:524.46px;font-size:16px;line-height:40px;color:#000;font-weight:700;transform:scaleX(0.9684);">Pv</div>
<div class=t style="left:661.58px;top:524.66px;font-size:16px;line-height:40px;color:#1e1e1e;transform:scaleX(1.0201);">is the present value, or the lump-sum amount that a series of future payments is worth</div>
<div class=t style="left:661.57px;top:546.36px;font-size:16px;line-height:40px;color:#1e1e1e;transform:scaleX(1.0288);">now. If omitted, Pv = 0.</div>
<div class=t style="left:509.57px;top:629.96px;font-size:16px;line-height:40px;color:#1e1e1e;transform:scaleX(1.0261);">Formula result =</div>
<div class=t style="left:646.00px;top:629.96px;font-size:16px;line-height:40px;color:#1e1e1e;transform:scaleX(0.9931);">$9,674,071.02</div>
<div class=t style="left:509.57px;top:678.46px;font-size:16px;line-height:40px;color:#2a72c6;transform:scaleX(1.0343);">Help on this function</div>
<div class=t style="left:1066.65px;top:677.06px;font-size:16px;line-height:40px;color:#1e1e1e;transform:scaleX(0.9545);">OK</div>
<div class=t style="left:1199.03px;top:677.06px;font-size:16px;line-height:40px;color:#1e1e1e;transform:scaleX(0.9667);">Cancel</div>
</body></html>
